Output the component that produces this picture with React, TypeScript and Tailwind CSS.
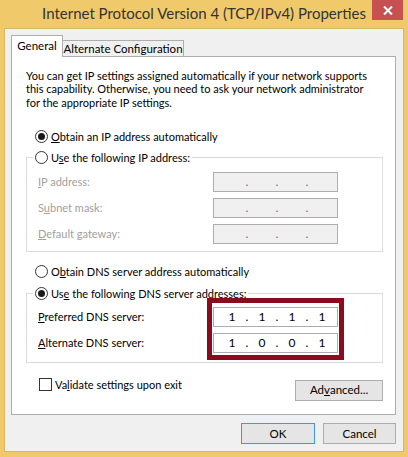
import React from 'react';

const font = { fontFamily: 'Lato, "Noto Sans", sans-serif' };

const Radio = ({ checked }: { checked?: boolean }) => (
  <span className="flex h-[13px] w-[13px] shrink-0 items-center justify-center rounded-full border border-[#333333] bg-white">
    {checked && <span className="h-[7px] w-[7px] rounded-full bg-[#1a1a1a]" />}
  </span>
);

const IpBox = ({ parts, disabled }: { parts: string[]; disabled?: boolean }) => (
  <div
    className={`flex h-[20px] w-[125px] items-center border pl-[3px] text-[12px] ${
      disabled ? 'border-[#adadad] bg-[#f0f0f0] text-[#6d6d8a]' : 'border-[#abadb3] bg-white text-black'
    }`}
  >
    {parts.map((p, i) => (
      <React.Fragment key={i}>
        {i > 0 && <span className="flex w-0 justify-center">.</span>}
        <span className="w-[30px] text-center">{p}</span>
      </React.Fragment>
    ))}
  </div>
);

const Row = ({ label, parts, disabled }: { label: React.ReactNode; parts: string[]; disabled?: boolean }) => (
  <div className="flex items-center">
    <span className={`w-[175px] ${disabled ? 'text-[#a0a0a0]' : 'text-black'}`}>{label}</span>
    <IpBox parts={parts} disabled={disabled} />
  </div>
);

const Button = ({ children, focused, className = '' }: { children: React.ReactNode; focused?: boolean; className?: string }) => (
  <div
    className={`flex h-[21px] items-center justify-center border bg-[#e5e5e5] text-[11.5px] text-black ${
      focused ? 'border-[#3c96f5]' : 'border-[#adadad]'
    } ${className}`}
  >
    {children}
  </div>
);

export default function App() {
  const empty = ['', '', '', ''];
  return (
    <div className="flex h-[457px] w-[408px] flex-col bg-[#f0c96b] px-[4px] pb-[5px]" style={font}>
      {/* title bar */}
      <div className="relative flex h-[28px] shrink-0 items-center justify-center pb-[1px]">
        <span className="text-[15px] text-[#333333]">Internet Protocol Version 4 (TCP/IPv4) Properties</span>
        <div className="absolute right-[1px] top-0 flex h-[20px] w-[31px] items-center justify-center bg-[#c75050]">
          <svg width="10" height="9" viewBox="0 0 10 9">
            <path d="M1 0.5 L9 8.5 M9 0.5 L1 8.5" stroke="#ffffff" strokeWidth="2" />
          </svg>
        </div>
      </div>

      {/* body */}
      <div className="flex flex-1 flex-col border border-[#d9b764] bg-[#f0f0f0] pl-[6px] pr-[7px] pt-[6px] text-[11px] leading-[16px]">
        {/* tabs */}
        <div className="relative z-10 flex items-end">
          <div className="-mb-px flex h-[22px] w-[52px] items-center justify-center border border-b-0 border-[#adadad] bg-white pb-[2px] text-[11.5px]">
            General
          </div>
          <div className="flex h-[16px] w-[121px] items-center justify-center whitespace-nowrap border border-l-0 border-b-0 border-[#adadad] bg-[#f0f0f0] text-[11.5px]">
            Alternate Configuration
          </div>
        </div>

        {/* panel */}
        <div className="flex h-[359px] flex-col border border-[#adadad] bg-white pl-[14px] pr-[12px] pt-[12px]">
          <p className="whitespace-nowrap leading-[13.3px] text-black">
            You can get IP settings assigned automatically if your network supports
            <br />
            this capability. Otherwise, you need to ask your network administrator
            <br />
            for the appropriate IP settings.
          </p>

          <div className="mt-[20px] flex items-center gap-[3px] pl-[9px]">
            <Radio checked />
            <span>
              <u>O</u>btain an IP address automatically
            </span>
          </div>

          <fieldset className="mt-[5px] border border-[#dcdcdc] pb-[7px]">
            <legend className="ml-[6px] flex items-center gap-[3px] bg-white px-[2px]">
              <Radio />
              <span>
                U<u>s</u>e the following IP address:
              </span>
            </legend>
            <div className="mt-[6px] flex flex-col gap-[6px] pl-[11px]">
              <Row disabled parts={empty} label={<><u>I</u>P address:</>} />
              <Row disabled parts={empty} label={<>S<u>u</u>bnet mask:</>} />
              <Row disabled parts={empty} label={<><u>D</u>efault gateway:</>} />
            </div>
          </fieldset>

          <div className="mt-[12px] flex items-center gap-[3px] pl-[9px]">
            <Radio />
            <span>
              O<u>b</u>tain DNS server address automatically
            </span>
          </div>

          <fieldset className="mt-[6px] border border-[#dcdcdc] pb-[9px]">
            <legend className="ml-[6px] flex items-center gap-[3px] bg-white px-[2px]">
              <Radio checked />
              <span>
                Us<u>e</u> the following DNS server addresses:
              </span>
            </legend>
            <div className="relative mt-[5px] flex flex-col gap-[6px] pl-[11px]">
              <Row parts={['1', '1', '1', '1']} label={<><u>P</u>referred DNS server:</>} />
              <Row parts={['1', '0', '0', '1']} label={<><u>A</u>lternate DNS server:</>} />
              {/* annotation frame */}
              <div className="pointer-events-none absolute left-[180px] top-[-9px] h-[62px] w-[137px] border-[5px] border-[#8b0a1e]" />
            </div>
          </fieldset>

          <div className="mt-[14px] flex items-start justify-between">
            <div className="flex items-center gap-[3px] pl-[13px]">
              <span className="h-[13px] w-[13px] border border-[#333333] bg-white" />
              <span>
                Va<u>l</u>idate settings upon exit
              </span>
            </div>
            <Button className="mt-[3px] w-[88px]">
              Ad<u>v</u>anced...
            </Button>
          </div>
        </div>

        {/* dialog buttons */}
        <div className="mt-[8px] flex justify-end gap-[8px]">
          <Button focused className="w-[74px]">
            OK
          </Button>
          <Button className="w-[73px]">Cancel</Button>
        </div>
      </div>
    </div>
  );
}
